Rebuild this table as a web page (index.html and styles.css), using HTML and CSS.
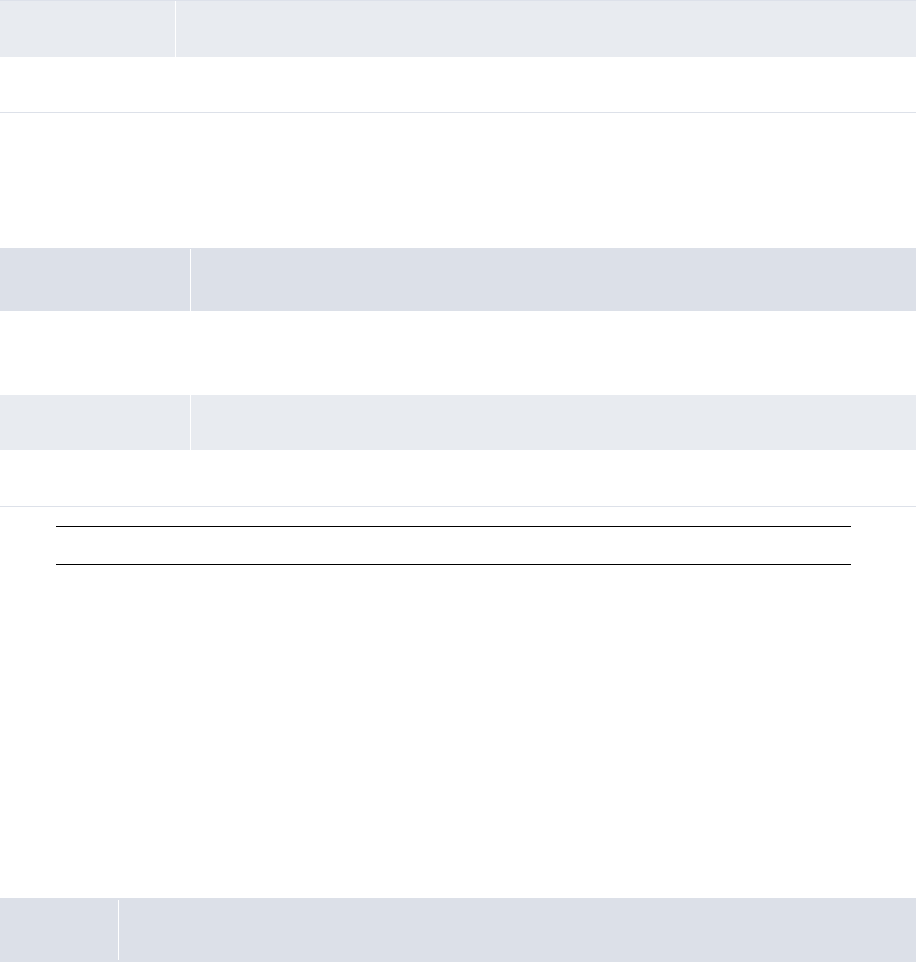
FILE: index.html
```html
<!DOCTYPE html>
<html lang="en">
<head>
<meta charset="utf-8">
<title>Page</title>
<link rel="stylesheet" href="styles.css">
</head>
<body>
<div class="page">
  <div class="bar bar-light bar-top">
    <div class="cell cell-175"></div>
    <div class="cell cell-rest"></div>
  </div>
  <div class="row row-top"></div>

  <div class="bar bar-dark bar-mid">
    <div class="cell cell-190"></div>
    <div class="cell cell-rest"></div>
  </div>

  <div class="bar bar-light bar-second">
    <div class="cell cell-190"></div>
    <div class="cell cell-rest"></div>
  </div>
  <div class="row row-second"></div>

  <div class="rule-box"></div>

  <div class="bar bar-dark bar-bottom">
    <div class="cell cell-118"></div>
    <div class="cell cell-rest"></div>
  </div>
</div>
</body>
</html>
```
FILE: styles.css
```css
html, body {
  margin: 0;
  padding: 0;
  background: #ffffff;
  font-family: "Liberation Sans", Arial, sans-serif;
}

.page {
  width: 916px;
  display: flex;
  flex-direction: column;
}

.bar {
  display: flex;
  box-sizing: border-box;
}

.bar-light { background: #e8ebf0; }
.bar-dark { background: #dce0e8; }

.cell { height: 100%; }
.cell-175 { width: 175px; flex: none; }
.cell-190 { width: 190px; flex: none; }
.cell-118 { width: 118px; flex: none; }
.cell-rest { flex: 1; border-left: 1px solid #ffffff; }

.bar-top {
  height: 57px;
  border-top: 1px solid #dde1ea;
}

.row {
  box-sizing: border-box;
  border-bottom: 1px solid #dde1e9;
}

.row-top { height: 56px; }

.bar-mid {
  margin-top: 135px;
  height: 63px;
  padding-top: 1px;
}

.bar-second {
  margin-top: 84px;
  height: 55px;
}

.row-second { height: 57px; }

.rule-box {
  margin: 19px 0 0 56px;
  width: 795px;
  height: 39px;
  box-sizing: border-box;
  border-top: 1px solid #000000;
  border-bottom: 1px solid #000000;
}

.bar-bottom {
  margin-top: 333px;
  height: 64px;
  padding: 2px 0;
}
```
